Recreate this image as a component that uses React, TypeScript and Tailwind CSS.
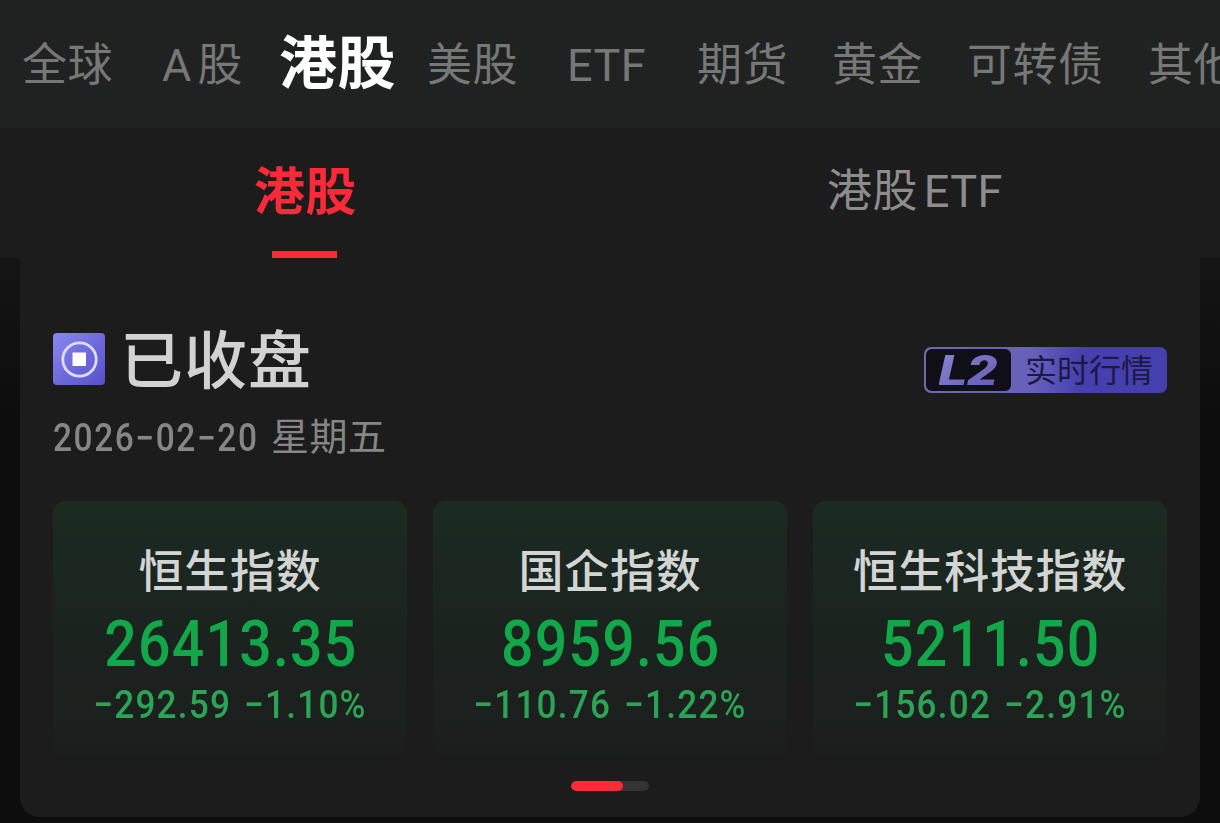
import clsx from 'clsx'

interface IndexQuote {
  name: string
  price: string
  change: string
  percent: string
}

const markets = ['全球', 'A 股', '港股', '美股', 'ETF', '期货', '黄金', '可转债', '其他']

const quotes: IndexQuote[] = [
  { name: '恒生指数', price: '26413.35', change: '−292.59', percent: '−1.10%' },
  { name: '国企指数', price: '8959.56', change: '−110.76', percent: '−1.22%' },
  { name: '恒生科技指数', price: '5211.50', change: '−156.02', percent: '−2.91%' },
]

function MarketTabs({ active }: { active: string }) {
  return (
    <nav className="grid h-32 grid-cols-[140px_118px_147px_140px_130px_135px_135px_181px_100px] items-center overflow-hidden bg-[#1f2221] pt-[2px] pl-[22px] font-[Roboto,'Noto_Sans_CJK_SC',sans-serif] whitespace-nowrap">
      {markets.map((m) => (
        <span
          key={m}
          className={clsx(
            'leading-none',
            m === active
              ? '-ml-px pb-[2px] text-[58px] font-bold tracking-[0.5px] text-white'
              : 'text-[45px] tracking-[0.5px] text-[#767877]',
            m === 'A 股' && '[word-spacing:-6px]'
          )}
        >
          {m}
        </span>
      ))}
    </nav>
  )
}

function SubTabs() {
  return (
    <div className="grid h-[130px] grid-cols-2 bg-[#1c1c1c]">
      <div className="flex flex-col items-center justify-between pt-[35px]">
        <span className="ml-px text-[51px] leading-none font-bold tracking-[0.5px] text-[#fa2a38]">港股</span>
        <span className="-ml-0.5 h-[7px] w-[65px] bg-[#fa2a38]" />
      </div>
      <div className="flex flex-col items-center pt-[41px]">
        <span className="font-[Roboto,'Noto_Sans_CJK_SC',sans-serif] text-[45px] leading-none tracking-[0.5px] text-[#8d8d8d] [word-spacing:-6px]">
          港股 ETF
        </span>
      </div>
    </div>
  )
}

function ClosedIcon() {
  return (
    <svg className="size-[52px]" viewBox="0 0 52 52" fill="none">
      <defs>
        <linearGradient id="closed" x1="0" y1="0" x2="1" y2="1">
          <stop stopColor="#8a86f0" />
          <stop offset="1" stopColor="#5650c8" />
        </linearGradient>
      </defs>
      <rect width="52" height="52" rx="4" fill="url(#closed)" />
      <circle cx="26.5" cy="26.5" r="16.7" stroke="#dddcfb" strokeWidth="2.8" />
      <rect x="19.5" y="19.5" width="13.5" height="13.5" fill="#fff" />
    </svg>
  )
}

function Level2Badge() {
  return (
    <div className="flex h-[46px] w-[243px] items-center rounded-[7px] bg-linear-to-r from-[#6f69a8] via-[#6660bc] via-45% to-[#463fae] to-65% p-[2px]">
      <div className="flex h-[42px] w-[85px] items-center justify-center rounded-[6px] bg-[#100f18]">
        <span className="mt-0.5 ml-1 origin-center scale-x-130 bg-linear-to-br from-[#8d86d2] to-[#5e57b0] bg-clip-text pr-1 font-[Roboto] text-[42px] leading-none font-black text-transparent italic">
          L2
        </span>
      </div>
      <span className="ml-[14px] pb-[4px] text-[32px] leading-none text-[#1c1945]">实时行情</span>
    </div>
  )
}

function QuoteCard({ quote }: { quote: IndexQuote }) {
  return (
    <div className="flex h-[255px] flex-col items-center rounded-xl bg-linear-to-b from-[#1b2b22] via-[#1b231f] via-50% to-[#1c1e1d] pt-[45px] whitespace-nowrap">
      <span className="text-[45px] leading-none font-medium tracking-[0.7px] text-[#d2d5d3]">{quote.name}</span>
      <span className="mt-[21px] ml-[2px] scale-x-88 font-[Roboto] text-[65px] leading-none font-medium tracking-[1.4px] text-[#12a84a]">
        {quote.price}
      </span>
      <span className="mt-[9px] scale-x-90 font-[Roboto] text-[39px] leading-none font-medium tracking-[1.4px] text-[#2ba555] [word-spacing:3px]">
        {quote.change} {quote.percent}
      </span>
    </div>
  )
}

export default function App() {
  return (
    <div className="h-[823px] w-[1220px] overflow-hidden bg-[#0e0e0e] font-['Noto_Sans_CJK_SC',sans-serif]">
      <MarketTabs active="港股" />
      <SubTabs />
      <div className="h-[565px] bg-linear-to-b from-[#141414] to-[#0d0d0d] to-30% px-5">
        <section className="h-[559px] rounded-b-[20px] bg-[#1c1c1c] px-[33px] pt-[68px]">
          <header className="flex h-[175px] justify-between">
            <div>
              <div className="flex h-[68px] items-center gap-[15px]">
                <span className="mt-[-2px]">
                  <ClosedIcon />
                </span>
                <h1 className="pb-[10px] text-[63px] leading-none font-medium tracking-[1px] text-[#d2d2d2]">已收盘</h1>
              </div>
              <p className="mt-[21px] flex gap-[12px] text-[38px] leading-none text-[#868686]">
                <span className="mt-[4px] w-[206px] origin-left scale-x-88 font-[Roboto] font-medium tracking-[1.8px]">
                  2026−02−20
                </span>
                <span className="tracking-[0.5px]">星期五</span>
              </p>
            </div>
            <div className="mt-[21px]">
              <Level2Badge />
            </div>
          </header>
          <div className="grid grid-cols-3 gap-[26px]">
            {quotes.map((q) => (
              <QuoteCard key={q.name} quote={q} />
            ))}
          </div>
          <div className="mx-auto mt-[25px] h-[10px] w-[78px] overflow-hidden rounded-full bg-[#343434]">
            <div className="h-full w-[52px] rounded-full bg-[#fa2a38]" />
          </div>
        </section>
      </div>
    </div>
  )
}
